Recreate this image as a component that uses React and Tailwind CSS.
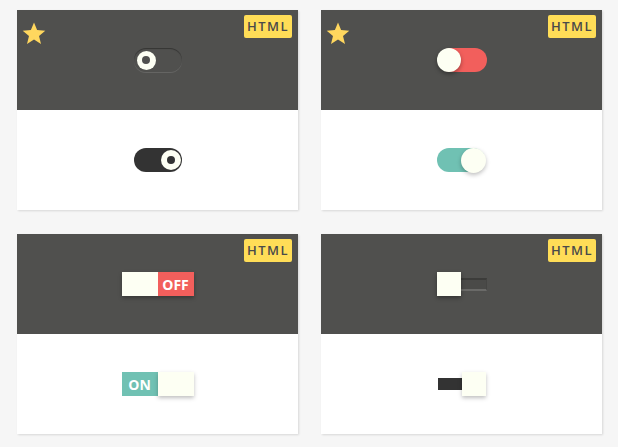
import React from "react";

function Star() {
  return (
    <svg
      className="absolute left-[5px] top-[12px]"
      width="24"
      height="23"
      viewBox="0 0 24 23"
    >
      <path
        d="M12 0.5l3.1 7.6 8.2 0.6-6.3 5.3 2 8-7-4.4-7 4.4 2-8L0.7 8.7l8.2-0.6z"
        fill="#ffd75e"
      />
    </svg>
  );
}

function Card({ star, top, bottom }) {
  return (
    <div className="w-[281px] h-[200px] flex flex-col shadow-[1px_1px_2px_rgba(0,0,0,0.12)]">
      <div className="relative h-[100px] bg-[#50504e] flex items-center justify-center">
        {star && <Star />}
        <span className="absolute right-[6px] top-[5px] w-[48px] h-[23px] rounded-[2px] bg-[#ffdd57] text-[#4a4a4a] text-[13px] font-semibold tracking-[1.5px] flex items-center justify-center">
          HTML
        </span>
        {top}
      </div>
      <div className="h-[100px] bg-white flex items-center justify-center">
        {bottom}
      </div>
    </div>
  );
}

export default function App() {
  return (
    <div
      className="w-[618px] h-[447px] bg-[#f6f6f6] pl-[17px] pt-[10px] grid grid-cols-[281px_281px] gap-x-[23px] gap-y-[24px] content-start"
      style={{ fontFamily: "'Open Sans', 'DejaVu Sans', sans-serif" }}
    >
      <Card
        star
        top={
          <div className="w-[48px] h-[24px] rounded-full shadow-[inset_0_1px_1px_rgba(0,0,0,0.35),0_1px_0_rgba(255,255,255,0.12)] flex items-center pl-[3px]">
            <div className="w-[19px] h-[19px] rounded-full bg-[#fdfff3] flex items-center justify-center">
              <div className="w-[8px] h-[8px] rounded-full bg-[#50504e]" />
            </div>
          </div>
        }
        bottom={
          <div className="w-[48px] h-[24px] rounded-full bg-[#333333] flex items-center justify-end pr-[1px]">
            <div className="w-[20px] h-[20px] rounded-full bg-[#fdfff3] flex items-center justify-center">
              <div className="w-[8px] h-[8px] rounded-full bg-[#333333]" />
            </div>
          </div>
        }
      />
      <Card
        star
        top={
          <div className="relative w-[50px] h-[24px]">
            <div className="absolute left-[2px] right-0 top-0 bottom-0 rounded-full bg-[#f25f5c]" />
            <div className="absolute left-0 top-0 w-[24px] h-[24px] rounded-full bg-[#fdfff3] shadow-[0_2px_4px_rgba(0,0,0,0.35)]" />
          </div>
        }
        bottom={
          <div className="relative w-[49px] h-[25px]">
            <div className="absolute left-0 right-[1px] top-0 h-[24px] rounded-full bg-[#70c1b3]" />
            <div className="absolute right-0 top-0 w-[25px] h-[25px] rounded-full bg-[#fdfff3] shadow-[0_2px_4px_rgba(0,0,0,0.25)]" />
          </div>
        }
      />
      <Card
        top={
          <div className="flex h-[24px] shadow-[0_2px_4px_rgba(0,0,0,0.3)]">
            <div className="w-[36px] h-[24px] bg-[#fdfff3]" />
            <div className="w-[36px] h-[24px] bg-[#f25f5c] text-white text-[14px] font-bold flex items-center justify-center">
              OFF
            </div>
          </div>
        }
        bottom={
          <div className="flex h-[24px]">
            <div className="w-[36px] h-[24px] bg-[#70c1b3] text-white text-[14px] font-bold flex items-center justify-center">
              ON
            </div>
            <div className="w-[36px] h-[24px] bg-[#fdfff3] shadow-[0_2px_4px_rgba(0,0,0,0.25)]" />
          </div>
        }
      />
      <Card
        top={
          <div className="flex items-center h-[24px]">
            <div className="w-[24px] h-[24px] bg-[#fdfff3] shadow-[0_2px_4px_rgba(0,0,0,0.35)] z-10" />
            <div className="w-[26px] h-[13px] border-t-2 border-b-2 border-r border-t-[#3c3c3a] border-b-[#6a6a68] border-r-[#454543] bg-[#4a4a48]" />
          </div>
        }
        bottom={
          <div className="flex items-center h-[24px]">
            <div className="w-[24px] h-[12px] bg-[#333333]" />
            <div className="w-[24px] h-[24px] bg-[#fdfff3] shadow-[0_2px_4px_rgba(0,0,0,0.25)]" />
          </div>
        }
      />
    </div>
  );
}
